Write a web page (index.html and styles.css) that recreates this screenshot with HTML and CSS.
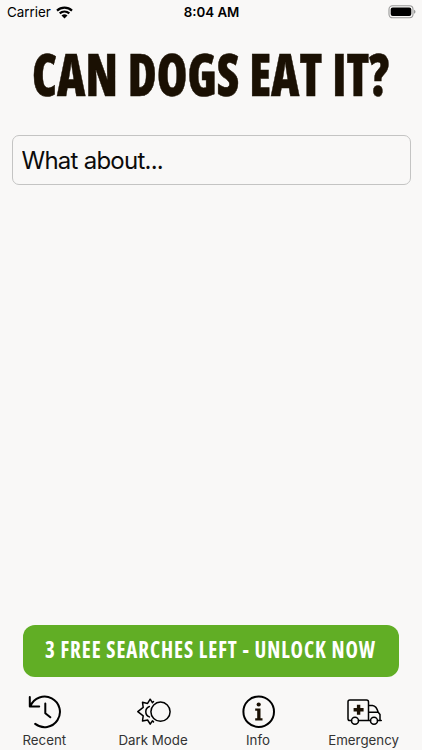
FILE: index.html
```html
<!DOCTYPE html>
<html lang="en">
    <head>
        <meta charset="utf-8">
        <title>Can Dogs Eat It?</title>
        <link rel="stylesheet" href="styles.css">
    </head>
    <body>
        <div class="status">
            <div class="carrier">
                <span>Carrier</span>
                <svg width="17" height="13" viewBox="0 0 17 13">
                    <path d="M1 4.6C5.3.7 11.700.7 16 4.600M3.700 7.400C6.500 4.900 10.500 4.900 13.300 7.400" fill="none" stroke="#000" stroke-width="2.200"/>
                    <path d="M8.500 12.500L5.500 9.500Q8.500 7.100 11.500 9.500Z"/>
                </svg>
            </div>
            <div class="time">8:04 AM</div>
            <svg class="battery" width="28" height="14" viewBox="0 0 28 14">
                <rect x="1" y=".8" width="24" height="12" rx="3.500" fill="none" stroke="#999" stroke-width="1.100"/>
                <rect x="2.700" y="2.500" width="20.600" height="8.600" rx="2"/>
                <path d="M26 4.800Q27.500 5.200 27.500 6.800T26 8.800Z" fill="#999"/>
            </svg>
        </div>
        <h1 class="title">
            <svg width="422" height="90" viewBox="0 0 422 90">
                <text x="32" y="66" textLength="357" lengthAdjust="spacingAndGlyphs">CAN DOGS EAT IT?</text>
            </svg>
        </h1>
        <input class="search" type="text" placeholder="What about...">
        <button class="unlock">
            <svg width="376" height="52" viewBox="0 0 376 52">
                <text x="22" y="33" textLength="331" lengthAdjust="spacingAndGlyphs">3 FREE SEARCHES LEFT - UNLOCK NOW</text>
            </svg>
        </button>
        <div class="tabs">
            <div class="tab recent">
                <svg width="36" height="36" viewBox="0 0 36 36">
                    <path d="M4.500 12A15.300 15.300 0 1 1 9.200 29.900M3.800 3V12.500H13.200M19.300 9.500V19.300L24.300 23.300"/>
                </svg>
                <span>Recent</span>
            </div>
            <div class="tab dark">
                <svg width="36" height="36" viewBox="0 0 36 36">
                    <g stroke-width="1.500">
                        <circle cx="25.500" cy="17.700" r="9.600"/>
                        <path d="M18.500 7.500L17.400 8.600L15.200 5.200L12.600 9.400L7.500 8.300L8.200 13.300L2.800 17.700L8.200 21.900L7.500 27L12.600 26L15.200 30.200L17.400 26.800L18.500 27.900M14.400 12.500Q10.800 13.700 10.800 17.700T14.400 22.900"/>
                    </g>
                </svg>
                <span>Dark Mode</span>
            </div>
            <div class="tab info">
                <svg width="36" height="36" viewBox="0 0 36 36">
                    <circle cx="18.700" cy="17.700" r="15.300"/>
                    <circle class="solid" cx="18.700" cy="10.500" r="2.100"/>
                    <path class="solid" d="M15.200 14.500H20.500V24.300H22.500V26.500H15.200V24.300H17.200V16.700H15.200Z"/>
                </svg>
                <span>Info</span>
            </div>
            <div class="tab emergency">
                <svg width="36" height="36" viewBox="0 0 36 36">
                    <g stroke-width="1.500">
                        <path d="M5.500 26.500H3.800Q2 26.500 2 24.700V7.800Q2 6 3.800 6H20.500Q22.500 6 22.500 8V26.500H12.500M22.500 26.500H24.500M22.500 11.500H26.500Q30.500 12 32.200 18.300L34 20.500V26.500H31.500M22.500 18.300H32.200M33 26.500H35.300"/>
                        <circle cx="9" cy="26.700" r="3.500"/>
                        <circle cx="28" cy="26.700" r="3.500"/>
                    </g>
                    <path class="solid" d="M10.900 10.700H14.300V14H17.600V17.400H14.300V20.700H10.900V17.400H7.600V14H10.900Z"/>
                </svg>
                <span>Emergency</span>
            </div>
        </div>
    </body>
</html>
```

FILE: styles.css
```css
* {
    box-sizing: border-box;
}

body {
    margin: 0;
    height: 750px;
    display: flex;
    flex-direction: column;
    background-color: #f9f8f7;
    font-family: Inter, "Liberation Sans", sans-serif;
    color: #000;
    overflow: hidden;
}

svg {
    display: block;
}

.status {
    display: grid;
    grid-template-columns: 1fr auto 1fr;
    align-items: center;
    height: 24px;
    padding: 0 6px 0 7px;
    font-size: 13.4px;
}

.carrier {
    display: flex;
    align-items: center;
    gap: 5px;
}

.time {
    font-weight: 600;
    font-size: 13.3px;
}

.battery {
    justify-self: end;
}

.title {
    margin: 6px 0 0;
    height: 90px;
}

.title text {
    font-family: "Open Sans", sans-serif;
    font-size: 59px;
    font-weight: 800;
    font-stretch: 75%;
    word-spacing: 1.5px;
    fill: #1a1003;
    stroke: #1a1003;
    stroke-width: 0.5px;
}

.search {
    height: 50px;
    margin: 15px 11.5px 0;
    padding: 0 9px;
    border: 1px solid #c4c4c3;
    border-radius: 7px;
    background: none;
    font-family: inherit;
    font-size: 24px;
    letter-spacing: -0.75px;
}

.search::placeholder {
    color: #0c0b0a;
}

/* Free search counter */
.unlock {
    height: 52px;
    margin: auto 23px 0;
    padding: 0;
    border: none;
    border-radius: 12px;
    background-color: #61ae25;
}

.unlock text {
    font-family: "Open Sans", sans-serif;
    font-size: 22.5px;
    font-weight: 700;
    font-stretch: 75%;
    letter-spacing: 1px;
    fill: #fff;
}

.tabs {
    display: flex;
    justify-content: space-between;
    height: 73px;
    padding: 17px 23px 0 22.5px;
}

.tab {
    display: flex;
    flex-direction: column;
    align-items: center;
    gap: 1px;
    font-size: 13.3px;
    line-height: 18px;
    color: #333;
}

.tab svg {
    fill: none;
    stroke: #000;
    stroke-width: 2;
    stroke-linecap: round;
    stroke-linejoin: round;
}

.tab .solid {
    fill: #1a1003;
    stroke: none;
}
```
